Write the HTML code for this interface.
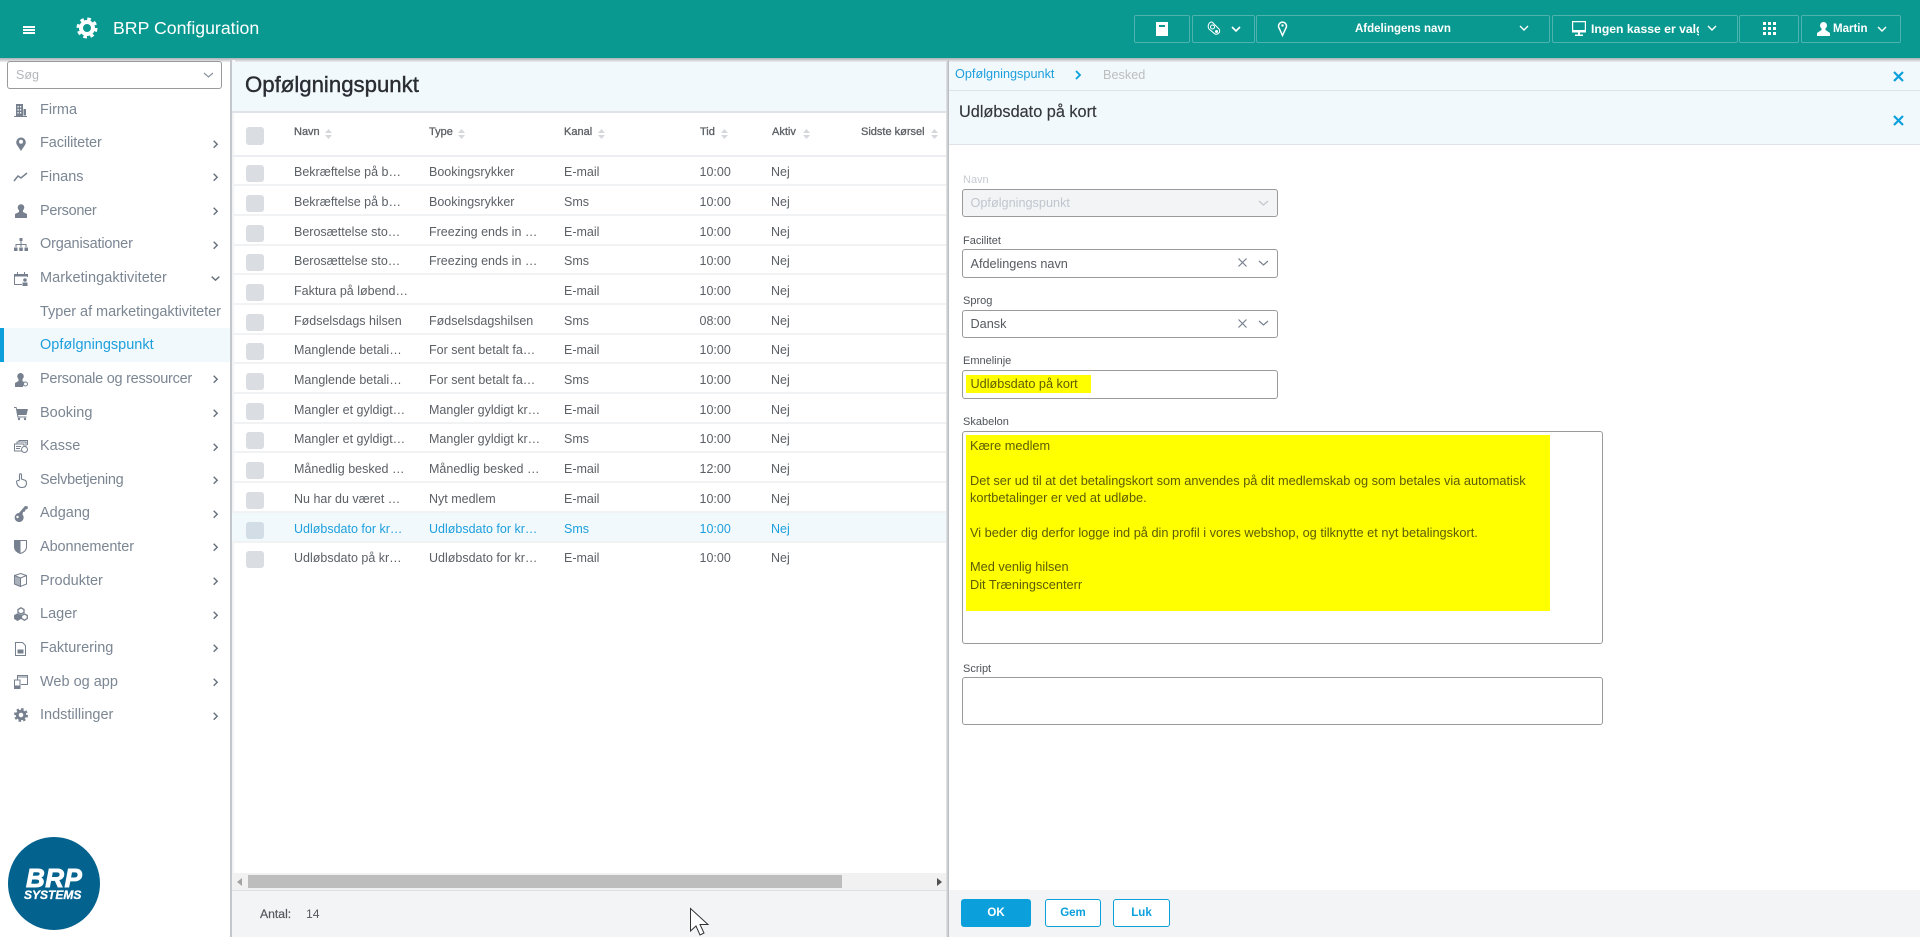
<!DOCTYPE html>
<html lang="da"><head><meta charset="utf-8"><title>BRP Configuration</title>
<style>
*{box-sizing:border-box}
html,body{margin:0;padding:0;width:1920px;height:937px;overflow:hidden;background:#fff;font-family:"Liberation Sans",sans-serif}
.t{position:absolute;white-space:nowrap;line-height:18px;height:18px}
svg{position:absolute;overflow:visible}
.m{font-size:14.5px;color:#7b8693;left:40px}
.row{position:absolute;left:232px;width:714px;height:30px;border-bottom:2px solid #f0f2f4;font-size:12.5px;color:#5b6066;line-height:32px}
.row span{position:absolute;top:0;white-space:nowrap}
.row i{position:absolute;left:14px;top:9px;width:18px;height:17px;background:#dadde2;border-radius:3px}
.c1{left:62px}.c2{left:197px}.c3{left:332px}.c4{left:467.500px}.c5{left:539px}
.sel{background:#f2f9fd;color:#1d9fdc}
.sel i{background:#d2dde6}
.h{font-size:11px;color:#5b6066;-webkit-text-stroke:.3px #5b6066}
.lab{font-size:11px;color:#4e5359;left:963px}
.inp{position:absolute;left:962px;width:316px;border:1px solid #9a9a9a;border-radius:3px;background:#fff}
.v{position:absolute;left:970.500px;font-size:12.7px;color:#555a60;white-space:nowrap;line-height:18px}
.top{position:absolute;top:15px;height:28px;border:1px solid #4db3ad;border-radius:2px}
.tw{position:absolute;color:#fff;font-size:11.5px;font-weight:bold;white-space:nowrap;line-height:18px;top:20px}
.tl{position:absolute;left:970px;font-size:12.78px;color:#5c5c08;white-space:nowrap;line-height:18px}
.btn{position:absolute;top:899px;height:28px;border:1px solid #0ba0dc;border-radius:3px;color:#0ba0dc;font-size:11.500px;font-weight:bold;text-align:center;line-height:26px;background:#fff}
</style></head><body>

<!-- header -->
<div style="position:absolute;left:0;top:0;width:1920px;height:58px;background:#0a9991"></div>
<div style="position:absolute;left:0;top:58px;width:1920px;height:4px;background:linear-gradient(#aab0b4,#eef0f2)"></div>
<div style="position:absolute;left:23px;top:26px;width:12px;height:2px;background:#fff"></div>
<div style="position:absolute;left:23px;top:29px;width:12px;height:2px;background:#fff"></div>
<div style="position:absolute;left:23px;top:32px;width:12px;height:2px;background:#fff"></div>
<svg style="left:76px;top:17px" width="22" height="22" viewBox="0 0 22 22"><circle cx="11" cy="11" r="9" fill="none" stroke="#fff" stroke-width="3" stroke-dasharray="3.6 3.47"/><circle cx="11" cy="11" r="6" fill="none" stroke="#fff" stroke-width="4"/></svg>
<div class="t" style="left:113px;top:18px;font-size:17.7px;color:#fff;line-height:20px;height:20px">BRP Configuration</div>

<div class="top" style="left:1134px;width:56px"></div>
<div class="top" style="left:1192px;width:63px"></div>
<div class="top" style="left:1256px;width:294px"></div>
<div class="top" style="left:1552px;width:186px"></div>
<div class="top" style="left:1739px;width:60px"></div>
<div class="top" style="left:1801px;width:100px"></div>
<svg style="left:1156px;top:22px" width="12" height="14" viewBox="0 0 12 14"><path d="M0 0H12V14H0Z" fill="#fff"/><path d="M3 3H9V5H3Z" fill="#0a9991"/></svg>
<svg style="left:1207px;top:21px" width="14" height="15" viewBox="0 0 14 15" fill="none" stroke="#fff"><path d="M5 1L12 8C14 11 11 14 8 13L2 8C0 5 2 1 5 1Z"/><circle cx="5.5" cy="6" r="2"/><circle cx="9.5" cy="10.5" r="1" fill="#fff"/></svg>
<svg style="left:1231px;top:26px" width="10" height="6" viewBox="0 0 10 6"><path d="M1 1L5 5L9 1" fill="none" stroke="#fff" stroke-width="1.6"/></svg>
<svg style="left:1278px;top:21px" width="9" height="15" viewBox="0 0 9 15"><path d="M4.500 14.500L1.300 7.500A4 4 0 1 1 7.700 7.500Z" fill="none" stroke="#fff" stroke-width="1.500"/><circle cx="4.500" cy="4.500" r="1.200" fill="#fff"/></svg>
<div class="tw" style="left:1355px">Afdelingens navn</div>
<svg style="left:1519px;top:25px" width="10" height="6" viewBox="0 0 10 6"><path d="M1 1L5 5L9 1" fill="none" stroke="#fff" stroke-width="1.400"/></svg>
<svg style="left:1572px;top:21px" width="14" height="16" viewBox="0 0 14 16" fill="none"><path d="M.6.6H13.400V10H.6Z" stroke="#fff" stroke-width="1.200"/><path d="M0 9H14V11.500H0ZM6 11H8V13.500H11V15H3V13.500H6Z" fill="#fff"/></svg>
<div class="tw" style="left:1591px;width:108px;overflow:hidden;font-size:12.200px">Ingen kasse er valgt</div>
<svg style="left:1707px;top:25px" width="10" height="6" viewBox="0 0 10 6"><path d="M1 1L5 5L9 1" fill="none" stroke="#fff" stroke-width="1.400"/></svg>
<svg style="left:1763px;top:22px" width="13" height="14" viewBox="0 0 13 14" fill="#fff"><path d="M0 0h3v3H0zM5 0h3v3H5zM10 0h3v3h-3zM0 5h3v3H0zM5 5h3v3H5zM10 5h3v3h-3zM0 10h3v3H0zM5 10h3v3H5zM10 10h3v3h-3z"/></svg>
<svg style="left:1817px;top:22px" width="13" height="14" viewBox="0 0 13 14"><circle cx="6.500" cy="3.500" r="3.500" fill="#fff"/><path d="M4.500 6H8.500V8L13 11V14H0V11L4.500 8Z" fill="#fff"/></svg>
<div class="tw" style="left:1833px">Martin</div>
<svg style="left:1877px;top:26px" width="10" height="6" viewBox="0 0 10 6"><path d="M1 1L5 5L9 1" fill="none" stroke="#fff" stroke-width="1.400"/></svg>

<!-- sidebar -->
<div style="position:absolute;left:230px;top:60px;width:2px;height:877px;background:#c4c7cb"></div>
<div style="position:absolute;left:232px;top:60px;width:3px;height:877px;background:linear-gradient(90deg,#eceef0,#fff)"></div>
<div style="position:absolute;left:7px;top:61px;width:215px;height:28px;border:1px solid #9a9a9a;border-radius:3px"></div>
<div class="t" style="left:16px;top:66px;font-size:12.500px;color:#b4b8bd">Søg</div>
<svg style="left:203px;top:72px" width="11" height="6" viewBox="0 0 11 6"><path d="M1 1L5.500 5L10 1" fill="none" stroke="#8a939e" stroke-width="1.200"/></svg>

<div style="position:absolute;left:0;top:328px;width:230px;height:34px;background:#f2f9fd"></div>
<div style="position:absolute;left:0;top:328px;width:4px;height:34px;background:#0ba0dc"></div>

<div class="t m" style="top:101px">Firma</div>
<div class="t m" style="top:134px;letter-spacing:-.1px">Faciliteter</div>
<div class="t m" style="top:168px">Finans</div>
<div class="t m" style="top:202px;letter-spacing:-.3px">Personer</div>
<div class="t m" style="top:235px;letter-spacing:-.17px">Organisationer</div>
<div class="t m" style="top:269px;letter-spacing:.06px">Marketingaktiviteter</div>
<div class="t m" style="top:303px;letter-spacing:-.04px">Typer af marketingaktiviteter</div>
<div class="t m" style="top:336px;color:#1d9fdc">Opfølgningspunkt</div>
<div class="t m" style="top:370px;letter-spacing:-.26px">Personale og ressourcer</div>
<div class="t m" style="top:404px">Booking</div>
<div class="t m" style="top:437px">Kasse</div>
<div class="t m" style="top:471px;letter-spacing:-.28px">Selvbetjening</div>
<div class="t m" style="top:504px">Adgang</div>
<div class="t m" style="top:538px;letter-spacing:-.1px">Abonnementer</div>
<div class="t m" style="top:572px">Produkter</div>
<div class="t m" style="top:605px">Lager</div>
<div class="t m" style="top:639px">Fakturering</div>
<div class="t m" style="top:673px">Web og app</div>
<div class="t m" style="top:706px">Indstillinger</div>

<!-- sidebar icons -->
<svg style="left:14px;top:104px" width="14" height="13" viewBox="0 0 14 13" fill="#76808e"><path d="M2 0H9V12H13V13H0V12H2ZM9.500 5H12V11.500H9.500Z" fill-rule="evenodd"/><path d="M3.500 2h1.200v1.500H3.500zM6 2h1.200v1.500H6zM3.500 5h1.200v1.500H3.500zM6 5h1.200v1.500H6zM3.500 8h1.200v1.500H3.500zM6 8h1.200v1.500H6z" fill="#fff"/></svg>
<svg style="left:16px;top:137px" width="10" height="14" viewBox="0 0 10 14"><path d="M5 14L1 8A4.800 4.800 0 1 1 9 8Z" fill="#76808e"/><circle cx="5" cy="4.800" r="2" fill="#fff"/></svg>
<svg style="left:14px;top:172px" width="14" height="10" viewBox="0 0 14 10"><path d="M0 9L4 4L7 6L13 1" fill="none" stroke="#76808e" stroke-width="1.500"/></svg>
<svg style="left:15px;top:204px" width="12" height="14" viewBox="0 0 12 14" fill="#76808e"><circle cx="6" cy="3.500" r="3.300"/><path d="M4 6H8V8L12 10V14H0V10L4 8Z"/></svg>
<svg style="left:14px;top:238px" width="14" height="13" viewBox="0 0 14 13" fill="#76808e"><path d="M5.500 0h3v3h-3zM6.500 3h1v3h5v3h-1V7H7.500v2h-1V7H2.500v2h-1V6h5zM0 9.500h3.500V13H0zM5.250 9.500h3.500V13h-3.500zM10.500 9.500H14V13h-3.500z"/></svg>
<svg style="left:14px;top:272px" width="14" height="14" viewBox="0 0 14 14"><path d="M.5 2.500H13.500V5M.5 2.500V12.500H8" fill="none" stroke="#76808e"/><path d="M0 2H14V4.500H0ZM3 0H4V2H3ZM10 0H11V2H10Z" fill="#76808e"/><circle cx="11" cy="8" r="1.800" fill="#76808e"/><path d="M8.500 10.500H13.500V14H8.500Z" fill="#76808e"/></svg>
<svg style="left:15px;top:373px" width="13" height="14" viewBox="0 0 13 14" fill="#76808e"><circle cx="5.500" cy="3.300" r="3.300"/><path d="M3.500 6H7.500V8L9 9L8 14H0V10L3.500 8Z"/><circle cx="10.500" cy="11" r="2" fill="none" stroke="#76808e"/></svg>
<svg style="left:14px;top:407px" width="14" height="13" viewBox="0 0 14 13" fill="#76808e"><path d="M0 0H2.500L3 2H14L12.500 8H4L4.500 9.500H12.500V10.500H3.500L1.800 1H0Z"/><circle cx="5" cy="12" r="1.200"/><circle cx="11" cy="12" r="1.200"/></svg>
<svg style="left:14px;top:440px" width="14" height="13" viewBox="0 0 14 13" fill="none" stroke="#76808e"><path d="M.5 4H10V11H.5ZM3 4V2H12V7M5 2V.5H13.500V5"/><circle cx="10.500" cy="9.500" r="3" fill="#fff"/><path d="M2 6.500H7M2 8.500H6"/></svg>
<svg style="left:16px;top:473px" width="11" height="15" viewBox="0 0 11 15"><path d="M3.500 7V1.800C3.500.5 5.500.5 5.500 1.800V6L9 7.200C10.200 7.800 10.500 8.500 10.500 10C10.500 12.500 9.500 14.500 6 14.500C3 14.500 1.800 13.200 1 11L.5 8.500C.8 7.500 2.500 7 3.500 8" fill="none" stroke="#76808e" stroke-width="1.100"/></svg>
<svg style="left:14px;top:506px" width="14" height="15" viewBox="0 0 14 15" fill="#76808e"><path d="M5 7L11 0L14 .5L13.500 3L11.500 3.500L11 5.500L9 6L8.500 8.500A4.500 4.500 0 1 1 5 7Z"/><circle cx="3.500" cy="11" r="1.200" fill="#fff"/></svg>
<svg style="left:14px;top:539px" width="13" height="15" viewBox="0 0 13 15"><path d="M.5 1.500H12.500V8C12.500 11 10 13.500 6.500 14.500C3 13.500 .5 11 .5 8Z" fill="none" stroke="#76808e"/><path d="M.5 1.500H6.500V14.500C3 13.500 .5 11 .5 8Z" fill="#76808e"/></svg>
<svg style="left:14px;top:573px" width="13" height="14" viewBox="0 0 13 14" fill="none" stroke="#76808e"><path d="M6.500.5L12.500 2.500V11L6.500 13.500L.5 11V2.500Z"/><path d="M.5 2.500L6.500 5V13.500L.5 11Z" fill="#aab1ba"/><path d="M6.500 5L12.500 2.500"/></svg>
<svg style="left:14px;top:607px" width="14" height="14" viewBox="0 0 14 14" fill="none" stroke="#76808e" stroke-width="1.300"><path d="M7 .8L10 2.500V5.500L7 7L4 5.500V2.500Z"/><path d="M3.500 7L6.500 8.500V11.500L3.500 13.200L.7 11.500V8.500Z" fill="#76808e"/><path d="M10.500 7L13.300 8.500V11.500L10.500 13.200L7.500 11.500V8.500Z"/></svg>
<svg style="left:15px;top:642px" width="11" height="14" viewBox="0 0 11 14" fill="none" stroke="#76808e"><path d="M.5.5H7.500L10.500 3.500V13.500H.5Z"/><path d="M2.500 7.500H8.500V11.500H2.500Z" fill="#76808e" stroke="none"/></svg>
<svg style="left:14px;top:675px" width="14" height="14" viewBox="0 0 14 14" fill="none" stroke="#76808e"><path d="M3.500 5V.5H13.500V9.500H7"/><path d="M3.500 2H13.500"/><path d="M.5 5H6V13.500H.5Z" fill="#fff"/><path d="M1 11H5.500V13.500H1Z" fill="#76808e"/></svg>
<svg style="left:14px;top:708px" width="14" height="14" viewBox="0 0 14 14"><circle cx="7" cy="7" r="6" fill="none" stroke="#76808e" stroke-width="2" stroke-dasharray="2.400 2.310"/><circle cx="7" cy="7" r="3.800" fill="none" stroke="#76808e" stroke-width="3"/></svg>

<!-- chevrons -->
<svg style="left:213px;top:140px" width="5" height="9" viewBox="0 0 5 9"><path d="M.7.7L4.200 4.200L.7 7.700" fill="none" stroke="#66707c" stroke-width="1.400"/></svg>
<svg style="left:213px;top:173px" width="5" height="9" viewBox="0 0 5 9"><path d="M.7.7L4.200 4.200L.7 7.700" fill="none" stroke="#66707c" stroke-width="1.400"/></svg>
<svg style="left:213px;top:207px" width="5" height="9" viewBox="0 0 5 9"><path d="M.7.7L4.200 4.200L.7 7.700" fill="none" stroke="#66707c" stroke-width="1.400"/></svg>
<svg style="left:213px;top:241px" width="5" height="9" viewBox="0 0 5 9"><path d="M.7.7L4.200 4.200L.7 7.700" fill="none" stroke="#66707c" stroke-width="1.400"/></svg>
<svg style="left:211px;top:276px" width="9" height="5" viewBox="0 0 9 5"><path d="M.7.7L4.500 4.200L8.300.7" fill="none" stroke="#66707c" stroke-width="1.400"/></svg>
<svg style="left:213px;top:375px" width="5" height="9" viewBox="0 0 5 9"><path d="M.7.7L4.200 4.200L.7 7.700" fill="none" stroke="#66707c" stroke-width="1.400"/></svg>
<svg style="left:213px;top:409px" width="5" height="9" viewBox="0 0 5 9"><path d="M.7.7L4.200 4.200L.7 7.700" fill="none" stroke="#66707c" stroke-width="1.400"/></svg>
<svg style="left:213px;top:443px" width="5" height="9" viewBox="0 0 5 9"><path d="M.7.7L4.200 4.200L.7 7.700" fill="none" stroke="#66707c" stroke-width="1.400"/></svg>
<svg style="left:213px;top:476px" width="5" height="9" viewBox="0 0 5 9"><path d="M.7.7L4.200 4.200L.7 7.700" fill="none" stroke="#66707c" stroke-width="1.400"/></svg>
<svg style="left:213px;top:510px" width="5" height="9" viewBox="0 0 5 9"><path d="M.7.7L4.200 4.200L.7 7.700" fill="none" stroke="#66707c" stroke-width="1.400"/></svg>
<svg style="left:213px;top:543px" width="5" height="9" viewBox="0 0 5 9"><path d="M.7.7L4.200 4.200L.7 7.700" fill="none" stroke="#66707c" stroke-width="1.400"/></svg>
<svg style="left:213px;top:577px" width="5" height="9" viewBox="0 0 5 9"><path d="M.7.7L4.200 4.200L.7 7.700" fill="none" stroke="#66707c" stroke-width="1.400"/></svg>
<svg style="left:213px;top:611px" width="5" height="9" viewBox="0 0 5 9"><path d="M.7.7L4.200 4.200L.7 7.700" fill="none" stroke="#66707c" stroke-width="1.400"/></svg>
<svg style="left:213px;top:644px" width="5" height="9" viewBox="0 0 5 9"><path d="M.7.7L4.200 4.200L.7 7.700" fill="none" stroke="#66707c" stroke-width="1.400"/></svg>
<svg style="left:213px;top:678px" width="5" height="9" viewBox="0 0 5 9"><path d="M.7.7L4.200 4.200L.7 7.700" fill="none" stroke="#66707c" stroke-width="1.400"/></svg>
<svg style="left:213px;top:712px" width="5" height="9" viewBox="0 0 5 9"><path d="M.7.7L4.200 4.200L.7 7.700" fill="none" stroke="#66707c" stroke-width="1.400"/></svg>

<!-- logo -->
<div style="position:absolute;left:8px;top:837px;width:92px;height:93px;border-radius:50%;background:#04628f"></div>
<div class="t" style="left:26px;top:866px;font-size:26px;font-weight:bold;font-style:italic;color:#fff;line-height:24px;height:24px;-webkit-text-stroke:.9px #fff;letter-spacing:.5px">BRP</div>
<div class="t" style="left:24px;top:888px;font-size:12px;font-weight:bold;font-style:italic;color:#fff;line-height:14px;height:14px;-webkit-text-stroke:.3px #fff">SYSTEMS</div>

<!-- list -->
<div style="position:absolute;left:232px;top:62px;width:714px;height:50px;background:#f2f9fd"></div>
<div style="position:absolute;left:232px;top:111px;width:714px;height:2px;background:#dfe3e7"></div>
<div class="t" style="left:245px;top:71px;font-size:22.2px;color:#2a2d33;line-height:28px;height:28px;-webkit-text-stroke:.4px #2a2d33">Opfølgningspunkt</div>

<div style="position:absolute;left:246px;top:127px;width:18px;height:18px;background:#dadde2;border-radius:3px"></div>
<div style="position:absolute;left:232px;top:155px;width:714px;height:2px;background:#eceef1"></div>
<div class="t h" style="left:294px;top:123px">Navn</div>
<div class="t h" style="left:429px;top:123px">Type</div>
<div class="t h" style="left:564px;top:123px">Kanal</div>
<div class="t h" style="left:700px;top:123px">Tid</div>
<div class="t h" style="left:772px;top:123px">Aktiv</div>
<div class="t h" style="left:861px;top:123px">Sidste kørsel</div>
<svg style="left:325px;top:129px" width="7" height="10" viewBox="0 0 7 10" fill="#d4d8dd"><path d="M3.500 0L7 4H0ZM0 6H7L3.500 10Z"/></svg>
<svg style="left:458px;top:129px" width="7" height="10" viewBox="0 0 7 10" fill="#d4d8dd"><path d="M3.500 0L7 4H0ZM0 6H7L3.500 10Z"/></svg>
<svg style="left:598px;top:129px" width="7" height="10" viewBox="0 0 7 10" fill="#d4d8dd"><path d="M3.500 0L7 4H0ZM0 6H7L3.500 10Z"/></svg>
<svg style="left:721px;top:129px" width="7" height="10" viewBox="0 0 7 10" fill="#d4d8dd"><path d="M3.500 0L7 4H0ZM0 6H7L3.500 10Z"/></svg>
<svg style="left:803px;top:129px" width="7" height="10" viewBox="0 0 7 10" fill="#d4d8dd"><path d="M3.500 0L7 4H0ZM0 6H7L3.500 10Z"/></svg>
<svg style="left:931px;top:129px" width="7" height="10" viewBox="0 0 7 10" fill="#d4d8dd"><path d="M3.500 0L7 4H0ZM0 6H7L3.500 10Z"/></svg>

<div class="row" style="top:156px"><i></i><span class="c1">Bekræftelse på b…</span><span class="c2">Bookingsrykker</span><span class="c3">E-mail</span><span class="c4">10:00</span><span class="c5">Nej</span></div>
<div class="row" style="top:186px"><i></i><span class="c1">Bekræftelse på b…</span><span class="c2">Bookingsrykker</span><span class="c3">Sms</span><span class="c4">10:00</span><span class="c5">Nej</span></div>
<div class="row" style="top:216px"><i></i><span class="c1">Berosættelse sto…</span><span class="c2">Freezing ends in …</span><span class="c3">E-mail</span><span class="c4">10:00</span><span class="c5">Nej</span></div>
<div class="row" style="top:245px"><i></i><span class="c1">Berosættelse sto…</span><span class="c2">Freezing ends in …</span><span class="c3">Sms</span><span class="c4">10:00</span><span class="c5">Nej</span></div>
<div class="row" style="top:275px"><i></i><span class="c1">Faktura på løbend…</span><span class="c3">E-mail</span><span class="c4">10:00</span><span class="c5">Nej</span></div>
<div class="row" style="top:305px"><i></i><span class="c1">Fødselsdags hilsen</span><span class="c2">Fødselsdagshilsen</span><span class="c3">Sms</span><span class="c4">08:00</span><span class="c5">Nej</span></div>
<div class="row" style="top:334px"><i></i><span class="c1">Manglende betali…</span><span class="c2">For sent betalt fa…</span><span class="c3">E-mail</span><span class="c4">10:00</span><span class="c5">Nej</span></div>
<div class="row" style="top:364px"><i></i><span class="c1">Manglende betali…</span><span class="c2">For sent betalt fa…</span><span class="c3">Sms</span><span class="c4">10:00</span><span class="c5">Nej</span></div>
<div class="row" style="top:394px"><i></i><span class="c1">Mangler et gyldigt…</span><span class="c2">Mangler gyldigt kr…</span><span class="c3">E-mail</span><span class="c4">10:00</span><span class="c5">Nej</span></div>
<div class="row" style="top:423px"><i></i><span class="c1">Mangler et gyldigt…</span><span class="c2">Mangler gyldigt kr…</span><span class="c3">Sms</span><span class="c4">10:00</span><span class="c5">Nej</span></div>
<div class="row" style="top:453px"><i></i><span class="c1">Månedlig besked …</span><span class="c2">Månedlig besked …</span><span class="c3">E-mail</span><span class="c4">12:00</span><span class="c5">Nej</span></div>
<div class="row" style="top:483px"><i></i><span class="c1">Nu har du været …</span><span class="c2">Nyt medlem</span><span class="c3">E-mail</span><span class="c4">10:00</span><span class="c5">Nej</span></div>
<div class="row sel" style="top:513px"><i></i><span class="c1">Udløbsdato for kr…</span><span class="c2">Udløbsdato for kr…</span><span class="c3">Sms</span><span class="c4">10:00</span><span class="c5">Nej</span></div>
<div class="row" style="top:542px;border-bottom:0"><i></i><span class="c1">Udløbsdato på kr…</span><span class="c2">Udløbsdato for kr…</span><span class="c3">E-mail</span><span class="c4">10:00</span><span class="c5">Nej</span></div>

<!-- scrollbar + footer -->
<div style="position:absolute;left:232px;top:873px;width:714px;height:17px;background:#f1f1f1"></div>
<div style="position:absolute;left:248px;top:875px;width:594px;height:13px;background:#bdbdbd"></div>
<svg style="left:237px;top:878px" width="5" height="8" viewBox="0 0 5 8"><path d="M5 0V8L0 4Z" fill="#a3a3a3"/></svg>
<svg style="left:937px;top:878px" width="5" height="8" viewBox="0 0 5 8"><path d="M0 0V8L5 4Z" fill="#505050"/></svg>
<div style="position:absolute;left:232px;top:890px;width:714px;height:47px;background:#f3f4f6;border-top:1px solid #dde0e5"></div>
<div class="t" style="left:260px;top:905px;font-size:12.2px;color:#55595f;-webkit-text-stroke:.2px #55595f">Antal:</div>
<div class="t" style="left:306px;top:905px;font-size:12.2px;color:#55595f">14</div>
<svg style="left:690px;top:908px" width="19" height="28" viewBox="0 0 19 28"><path d="M.5.5V23L6 18L10 27L14 25L10 16.500H18Z" fill="#fff" stroke="#333" stroke-width="1"/></svg>

<!-- detail panel -->
<div style="position:absolute;left:946px;top:60px;width:3px;height:877px;background:linear-gradient(90deg,#e6e7e9,#b2b6ba)"></div>
<div style="position:absolute;left:949px;top:62px;width:971px;height:29px;background:#f2f9fd"></div>
<div style="position:absolute;left:949px;top:90px;width:971px;height:1px;background:#dfe3e7"></div>
<div style="position:absolute;left:949px;top:91px;width:971px;height:54px;background:#f2f9fd;border-bottom:1px solid #dfe3e7"></div>
<div class="t" style="left:955px;top:65px;font-size:12.700px;color:#1d9fdc">Opfølgningspunkt</div>
<svg style="left:1075px;top:70px" width="6" height="10" viewBox="0 0 6 10"><path d="M1 1L5 5L1 9" fill="none" stroke="#0ba0dc" stroke-width="1.800"/></svg>
<div class="t" style="left:1103px;top:66px;font-size:12.700px;color:#bdbdbd">Besked</div>
<svg style="left:1893px;top:71px" width="11" height="11" viewBox="0 0 11 11"><path d="M1 1L10 10M10 1L1 10" stroke="#0ba0dc" stroke-width="2.200"/></svg>
<svg style="left:1893px;top:115px" width="11" height="11" viewBox="0 0 11 11"><path d="M1 1L10 10M10 1L1 10" stroke="#0ba0dc" stroke-width="2.200"/></svg>
<div class="t" style="left:959px;top:103px;font-size:16.300px;color:#33363b;-webkit-text-stroke:.15px #33363b">Udløbsdato på kort</div>

<div class="t lab" style="top:171px;color:#c6cbd2">Navn</div>
<div class="inp" style="top:189px;height:28px;background:#f3f4f6"></div>
<div class="v" style="top:194px;color:#c0c6ce">Opfølgningspunkt</div>
<svg style="left:1258px;top:200px" width="11" height="6" viewBox="0 0 11 6"><path d="M1 1L5.500 5L10 1" fill="none" stroke="#c0c6ce" stroke-width="1.200"/></svg>

<div class="t lab" style="top:232px">Facilitet</div>
<div class="inp" style="top:249px;height:29px"></div>
<div class="v" style="top:255px">Afdelingens navn</div>
<svg style="left:1238px;top:258px" width="9" height="9" viewBox="0 0 9 9"><path d="M.5.5L8.500 8.500M8.500.5L.5 8.500" stroke="#76808e" stroke-width="1.200"/></svg>
<svg style="left:1258px;top:260px" width="11" height="6" viewBox="0 0 11 6"><path d="M1 1L5.500 5L10 1" fill="none" stroke="#76808e" stroke-width="1.200"/></svg>

<div class="t lab" style="top:292px">Sprog</div>
<div class="inp" style="top:310px;height:28px"></div>
<div class="v" style="top:315px">Dansk</div>
<svg style="left:1238px;top:319px" width="9" height="9" viewBox="0 0 9 9"><path d="M.5.5L8.500 8.500M8.500.5L.5 8.500" stroke="#76808e" stroke-width="1.200"/></svg>
<svg style="left:1258px;top:320px" width="11" height="6" viewBox="0 0 11 6"><path d="M1 1L5.500 5L10 1" fill="none" stroke="#76808e" stroke-width="1.200"/></svg>

<div class="t lab" style="top:352px">Emnelinje</div>
<div class="inp" style="top:370px;height:29px"></div>
<div style="position:absolute;left:966px;top:375px;width:125px;height:18px;background:#ffff00"></div>
<div class="v" style="top:375px;color:#5c5c08">Udløbsdato på kort</div>

<div class="t lab" style="top:413px">Skabelon</div>
<div class="inp" style="top:431px;height:213px;width:641px"></div>
<div style="position:absolute;left:966px;top:435px;width:584px;height:176px;background:#ffff00"></div>
<div class="tl" style="top:437px">Kære medlem</div>
<div class="tl" style="top:472px">Det ser ud til at det betalingskort som anvendes på dit medlemskab og som betales via automatisk</div>
<div class="tl" style="top:489px">kortbetalinger er ved at udløbe.</div>
<div class="tl" style="top:524px">Vi beder dig derfor logge ind på din profil i vores webshop, og tilknytte et nyt betalingskort.</div>
<div class="tl" style="top:558px">Med venlig hilsen</div>
<div class="tl" style="top:576px">Dit Træningscenterr</div>

<div class="t lab" style="top:660px">Script</div>
<div class="inp" style="top:677px;height:48px;width:641px"></div>

<div style="position:absolute;left:949px;top:890px;width:971px;height:47px;background:#f3f4f6"></div>
<div class="btn" style="left:961px;width:70px;background:#0ba0dc;color:#fff">OK</div>
<div class="btn" style="left:1045px;width:56px">Gem</div>
<div class="btn" style="left:1113px;width:57px">Luk</div>
</body></html>
